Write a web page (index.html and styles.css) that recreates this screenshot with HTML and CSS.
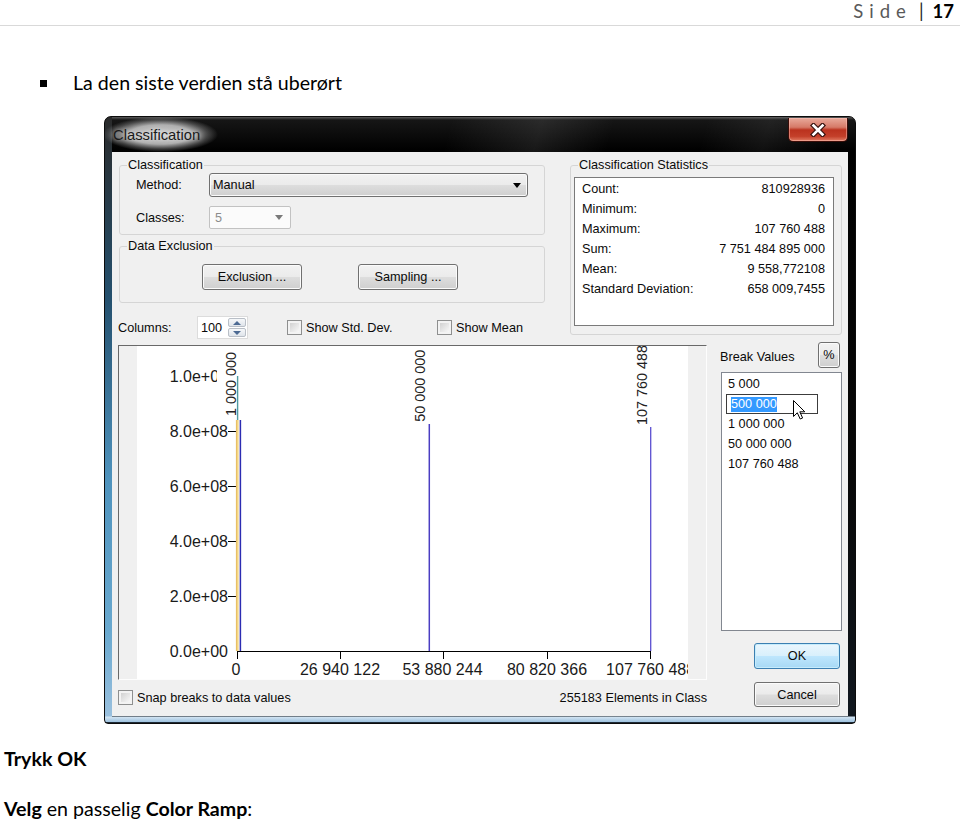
FILE: index.html
```html
<!DOCTYPE html>
<html lang="no">
<head>
<meta charset="utf-8">
<title>Side 17</title>
<link rel="stylesheet" href="styles.css">
</head>
<body>
<header class="page-header"><span class="side">Side</span><span class="sep">|</span><span class="num">17</span></header>

<div class="bullet-line"><span class="bullet"></span><span>La den siste verdien stå uberørt</span></div>

<div class="dialog">
  <div class="titlebar">
    <span class="title">Classification</span>
    <span class="close"><svg width="16" height="14" viewBox="0 0 16 14"><path d="M3.5 2.5 L12.5 11.5 M12.5 2.5 L3.5 11.5" stroke="#3a1510" stroke-width="5" stroke-linecap="square" fill="none"/><path d="M3.5 2.5 L12.5 11.5 M12.5 2.5 L3.5 11.5" stroke="#fff" stroke-width="2.6" stroke-linecap="square" fill="none"/></svg></span>
  </div>
  <div class="content">
    <div class="upper">
      <div class="left-col">
        <fieldset class="group g-class">
          <legend>Classification</legend>
          <div class="form-row r-method"><span class="lbl">Method:</span><div class="select"><span>Manual</span><span class="tri"></span></div></div>
          <div class="form-row r-classes"><span class="lbl">Classes:</span><div class="combo"><span>5</span><span class="tri grey"></span></div></div>
        </fieldset>
        <fieldset class="group g-excl">
          <legend>Data Exclusion</legend>
          <div class="btn-row"><div class="btn w100">Exclusion ...</div><div class="btn w100">Sampling ...</div></div>
        </fieldset>
        <div class="columns-row">
          <span class="col-lbl">Columns:</span>
          <div class="spin"><span class="spin-val">100</span><span class="spin-btns"><span class="sb"><span class="up"></span></span><span class="sb"><span class="down"></span></span></span></div>
          <span class="check c1"></span><span class="chk-text t1">Show Std. Dev.</span>
          <span class="check"></span><span class="chk-text">Show Mean</span>
        </div>
      </div>
      <fieldset class="group g-stats">
        <legend>Classification Statistics</legend>
        <div class="stats-box">
          <div class="stat"><span>Count:</span><span>810928936</span></div>
          <div class="stat"><span>Minimum:</span><span>0</span></div>
          <div class="stat"><span>Maximum:</span><span>107 760 488</span></div>
          <div class="stat"><span>Sum:</span><span>7 751 484 895 000</span></div>
          <div class="stat"><span>Mean:</span><span>9 558,772108</span></div>
          <div class="stat"><span>Standard Deviation:</span><span>658 009,7455</span></div>
        </div>
      </fieldset>
    </div>
    <div class="lower">
      <div class="chart-col">
        <div class="chart">
          <svg class="plot" width="587" height="333" viewBox="0 0 587 333">
            <rect width="587" height="333" fill="#f0f0f0"/>
            <rect x="18" y="0" width="551" height="333" fill="#fff"/>
            <g class="ylab">
              <text x="109" y="35.7">1.0e+08</text>
              <text x="109" y="90.7">8.0e+08</text>
              <text x="109" y="145.7">6.0e+08</text>
              <text x="109" y="200.7">4.0e+08</text>
              <text x="109" y="255.7">2.0e+08</text>
              <text x="109" y="310.7">0.0e+00</text>
            </g>
            <rect x="98" y="16" width="20" height="28" fill="#fff"/>
            <g stroke="#000" stroke-width="1" fill="none">
              <path d="M109 85.5H119 M109 140.5H119 M109 195.5H119 M109 250.5H119"/>
              <path d="M118 305.5H532"/>
              <path d="M118.5 305V313 M221.5 305V313 M324.5 305V313 M428.5 305V313 M531.5 305V313"/>
            </g>
            <g class="xlab">
              <text x="117" y="328.5">0</text>
              <text x="221" y="328.5">26 940 122</text>
              <text x="323.5" y="328.5">53 880 244</text>
              <text x="428" y="328.5">80 820 366</text>
              <text x="531.6" y="328.5">107 760 488</text>
            </g>
            <rect x="117" y="74" width="2.6" height="231" fill="#f4d684"/>
            <path d="M117.4 74V305" stroke="#e2b75c" stroke-width="0.8"/>
            <path d="M118.6 30V74" stroke="#4f9aa0" stroke-width="1.4"/>
            <path d="M121.4 74V305" stroke="#2c2cb2" stroke-width="1.5"/>
            <path d="M310.3 78V305" stroke="#4a3dc2" stroke-width="1.5"/>
            <path d="M531.7 81V305" stroke="#5b4fd0" stroke-width="1.3"/>
            <g class="rlab">
              <text transform="translate(117.3 70) rotate(-90)">1 000 000</text>
              <text transform="translate(306 75.7) rotate(-90)">50 000 000</text>
              <text transform="translate(527.7 79) rotate(-90)">107 760 488</text>
            </g>
            <rect x="569" y="0" width="18" height="333" fill="#f0f0f0"/>
          </svg>
        </div>
        <div class="snap-row"><span class="check"></span><span class="snap-text">Snap breaks to data values</span><span class="elements">255183 Elements in Class</span></div>
      </div>
      <div class="break-col">
        <div class="break-head"><span class="bv-lbl">Break Values</span><div class="btn pct">%</div></div>
        <div class="break-list">
          <div class="item">5 000</div>
          <div class="item editing"><span class="sel">500 000</span></div>
          <div class="item">1 000 000</div>
          <div class="item">50 000 000</div>
          <div class="item">107 760 488</div>
          <svg class="cursor" width="13" height="20" viewBox="0 0 13 20"><path d="M0.5 0.5 L0.5 16.5 L4.3 12.8 L7.2 19 L9.6 18 L6.8 11.8 L11.8 11.8 Z" fill="#fff" stroke="#000" stroke-width="1" stroke-linejoin="round"/></svg>
        </div>
        <div class="btn ok">OK</div>
        <div class="btn cancel">Cancel</div>
      </div>
    </div>
  </div>
</div>

<p class="doc-line first"><b>Trykk OK</b></p>
<p class="doc-line second"><b>Velg</b> en passelig <b>Color Ramp</b>:</p>
</body>
</html>
```

FILE: styles.css
```css
html, body {
  margin: 0;
  padding: 0;
  background: #fff;
}
body {
  width: 960px;
  font-family: Lato, "Open Sans", "DejaVu Sans", sans-serif;
  color: #000;
}

/* page header */
.page-header {
  height: 25px;
  border-bottom: 1px solid #d9d9d9;
  display: flex;
  justify-content: flex-end;
  align-items: flex-start;
  padding-right: 6px;
  font-size: 18.5px;
  line-height: 22px;
}
.page-header .side {
  color: #595959;
  letter-spacing: 6px;
}
.page-header .sep {
  margin-left: 7px;
  margin-right: 9px;
  color: #222;
}
.page-header .num {
  font-weight: 700;
}

/* bullet */
.bullet-line {
  display: flex;
  align-items: center;
  margin-top: 45px;
  height: 24px;
  padding-left: 40px;
  font-size: 19.6px;
  line-height: 24px;
}
.bullet {
  width: 7px;
  height: 7px;
  background: #000;
  margin-right: 26px;
}

/* document lines */
.doc-line {
  margin: 23px 0 0 0;
  padding-left: 4px;
  font-size: 19.6px;
  line-height: 24px;
}
.doc-line.second { margin-top: 26px; }
.doc-line b { font-weight: 700; }

/* dialog window */
.dialog {
  margin: 21px 0 0 104px;
  width: 752px;
  height: 608px;
  box-sizing: border-box;
  border: 1px solid #0c0c0c;
  border-radius: 7px 7px 4px 4px;
  display: flex;
  flex-direction: column;
  overflow: hidden;
  background:
    linear-gradient(to top, #1d2935 0, #1d2935 1px, #9ec2df 1px, #d2e4f2 6px, rgba(210,228,242,0) 7px) left bottom / 100% 8px no-repeat,
    linear-gradient(to bottom, #2a2a2a 0, #24506e 30%, #4f93bd 60%, #6aa9cf 85%, #9ec2df 100%) left top / 7px 100% no-repeat,
    linear-gradient(105deg, rgba(255,255,255,0) 38%, rgba(255,255,255,0.09) 48%, rgba(255,255,255,0) 56%, rgba(255,255,255,0) 66%, rgba(255,255,255,0.06) 73%, rgba(255,255,255,0) 80%),
    linear-gradient(to bottom, #5a5a5a 0, #161616 3px, #000 34px, #080808 60%, #111820 100%);
  font-family: "Liberation Sans", Arial, sans-serif;
}
.titlebar {
  height: 35px;
  flex: none;
  display: flex;
  justify-content: space-between;
  align-items: flex-start;
}
.title {
  margin-left: -2px;
  padding: 10px 18px 9px 10px;
  font-size: 14.8px;
  line-height: 16px;
  color: #1a1a1a;
  background: radial-gradient(closest-side, rgba(225,225,225,0.92) 0, rgba(215,215,215,0.8) 55%, rgba(170,170,170,0.35) 82%, rgba(120,120,120,0) 100%);
  text-shadow: 0 0 5px rgba(255,255,255,0.8);
}
.close {
  margin-top: 1px;
  margin-right: 7px;
  width: 60px;
  height: 24px;
  box-sizing: border-box;
  border: 1px solid #3a0d08;
  border-top: none;
  border-radius: 0 0 5px 5px;
  background: linear-gradient(to bottom, #e9aa9b 0, #d67a68 40%, #bb321e 52%, #c4402a 80%, #e27d64 100%);
  box-shadow: inset 0 0 0 1px rgba(255,200,190,0.45);
  display: flex;
  align-items: center;
  justify-content: center;
}

.content {
  flex: 1;
  margin: 0 7px 7px 7px;
  background: #f0f0f0;
  padding: 6px 6px 0 6px;
  font-size: 12.7px;
  line-height: 14px;
  color: #0a0a0a;
}

/* group boxes */
.group {
  margin: 0;
  padding: 0;
  min-width: 0;
  border: 1px solid #d5d5d5;
  border-radius: 3px;
  box-sizing: border-box;
}
.group legend {
  margin-left: 7px;
  padding: 0 1px;
  line-height: 14px;
  font-size: 12.7px;
}

.upper {
  display: flex;
  align-items: flex-start;
}
.left-col {
  width: 427px;
}
.g-class, .g-excl {
  margin-left: 1px;
  width: 426px;
}
.g-class {
  padding-bottom: 5px;
}
.g-excl {
  margin-top: 4px;
  padding-bottom: 12px;
}
.form-row {
  display: flex;
  align-items: center;
  padding-left: 16px;
}
.r-method { margin-top: 1px; height: 24px; }
.r-classes { margin-top: 9px; height: 23px; }
.lbl { width: 73px; }

.select {
  width: 319px;
  height: 24px;
  box-sizing: border-box;
  border: 1px solid #707070;
  border-radius: 3px;
  background: linear-gradient(to bottom, #f2f2f2 0, #ebebeb 48%, #dddddd 52%, #cfcfcf 100%);
  box-shadow: inset 0 0 0 1px #fafafa;
  display: flex;
  align-items: center;
  justify-content: space-between;
  padding: 0 6px 0 3px;
}
.tri {
  width: 0;
  height: 0;
  border-left: 4px solid transparent;
  border-right: 4px solid transparent;
  border-top: 5px solid #000;
}
.tri.grey { border-top-color: #7a7a7a; }
.combo {
  width: 82px;
  height: 23px;
  box-sizing: border-box;
  border: 1px solid #c2c2c2;
  border-radius: 2px;
  background: #fbfbfb;
  display: flex;
  align-items: center;
  justify-content: space-between;
  padding: 0 7px 0 5px;
  color: #8c8c8c;
}

.btn {
  box-sizing: border-box;
  border: 1px solid #707070;
  border-radius: 3px;
  background: linear-gradient(to bottom, #f2f2f2 0, #ebebeb 48%, #dddddd 52%, #cfcfcf 100%);
  box-shadow: inset 0 0 0 1px #fbfbfb;
  display: flex;
  align-items: center;
  justify-content: center;
}
.btn-row {
  margin-top: 11px;
  padding-left: 82px;
  display: flex;
  gap: 56px;
}
.w100 { width: 100px; height: 26px; }

.columns-row {
  margin-top: 13px;
  height: 23px;
  display: flex;
  align-items: center;
}
.col-lbl { width: 79px; }
.spin {
  width: 51px;
  height: 23px;
  box-sizing: border-box;
  border: 1px solid #dcdcdc;
  background: #fff;
  display: flex;
  align-items: stretch;
}
.spin-val {
  flex: 1;
  padding-left: 3px;
  display: flex;
  align-items: center;
}
.spin-btns {
  width: 18px;
  display: flex;
  flex-direction: column;
  padding: 1px 1px 1px 0;
  gap: 1px;
}
.sb {
  flex: 1;
  border: 1px solid #b9bfc7;
  border-radius: 2px;
  background: linear-gradient(to bottom, #f6f8fa, #dfe4ea);
  display: flex;
  align-items: center;
  justify-content: center;
}
.up, .down {
  width: 0;
  height: 0;
  border-left: 4px solid transparent;
  border-right: 4px solid transparent;
}
.up { border-bottom: 4px solid #4c6a93; }
.down { border-top: 4px solid #4c6a93; }

.check {
  width: 15px;
  height: 15px;
  box-sizing: border-box;
  border: 1px solid #8e8f8f;
  background: linear-gradient(135deg, #c9c9c9 0%, #f8f8f8 85%);
  box-shadow: inset 0 0 0 2px #f3f3f3;
  flex: none;
}
.c1 { margin-left: 39px; }
.chk-text { margin-left: 4px; }
.t1 { width: 131px; }

/* stats */
.g-stats {
  margin-left: 25px;
  width: 272px;
}
.stats-box {
  margin: 5px 7px 8px 3px;
  height: 149px;
  box-sizing: border-box;
  border: 1px solid #7a7a7a;
  background: #fff;
  padding: 1px 8px 0 7px;
}
.stat {
  display: flex;
  justify-content: space-between;
  line-height: 20px;
}

/* lower section */
.lower {
  margin-top: 3px;
  display: flex;
  align-items: flex-start;
}
.chart-col {
  width: 589px;
  margin-top: 3px;
}
.chart {
  width: 589px;
  height: 335px;
  box-sizing: border-box;
  border-top: 1px solid #696969;
  border-left: 1px solid #696969;
  border-right: 1px solid #fdfdfd;
  border-bottom: 1px solid #fdfdfd;
}
.plot {
  display: block;
  font-family: "Liberation Sans", Arial, sans-serif;
}
.ylab text {
  font-size: 16px;
  fill: #1a1a1a;
  text-anchor: end;
}
.xlab text {
  font-size: 16px;
  fill: #1a1a1a;
  text-anchor: middle;
}
.rlab text {
  font-size: 14.4px;
  fill: #222;
}
.snap-row {
  margin-top: 9px;
  height: 17px;
  display: flex;
  align-items: center;
}
.snap-text { margin-left: 4px; }
.elements { margin-left: auto; }

.break-col {
  margin-left: 13px;
  width: 122px;
}
.break-head {
  height: 26px;
  display: flex;
  align-items: flex-start;
  justify-content: space-between;
}
.bv-lbl { margin-top: 8px; }
.pct {
  width: 22px;
  height: 26px;
  margin-right: 2px;
}
.break-list {
  position: relative;
  margin-top: 4px;
  margin-left: 1px;
  width: 121px;
  height: 259px;
  box-sizing: border-box;
  border: 1px solid #828790;
  background: #fff;
  padding-top: 1px;
}
.item {
  height: 20px;
  line-height: 20px;
  padding-left: 6px;
}
.item.editing {
  margin-left: 4px;
  width: 92px;
  box-sizing: border-box;
  border: 1px solid #3c3c3c;
  padding-left: 4px;
  line-height: 18px;
  display: flex;
  align-items: center;
}
.sel {
  background: #3399ff;
  color: #fff;
  line-height: 15px;
}
.cursor {
  position: absolute;
  left: 71px;
  top: 27px;
}
.ok {
  margin-top: 12px;
  margin-left: 34px;
  width: 86px;
  height: 26px;
  border-color: #3c7fb1;
  background: linear-gradient(to bottom, #eaf6fd 0, #d9f0fc 48%, #bee6fd 52%, #a7d9f5 100%);
  box-shadow: inset 0 0 0 1px #c6ecfc;
}
.cancel {
  margin-top: 13px;
  margin-left: 34px;
  width: 86px;
  height: 25px;
}
```
